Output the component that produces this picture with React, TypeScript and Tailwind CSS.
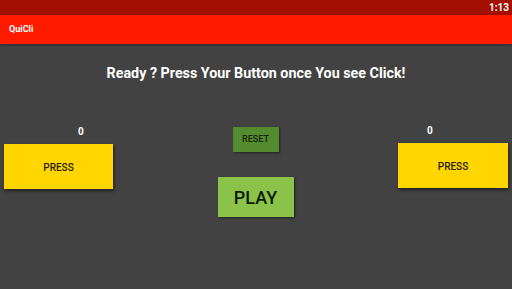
import React from "react";

export default function App() {
  const font = { fontFamily: "Roboto, 'Liberation Sans', sans-serif" };
  return (
    <div className="w-[512px] h-[289px] flex flex-col bg-[#424242] overflow-hidden" style={font}>
      <div className="h-[15px] bg-[#a30f00] flex items-center justify-end pr-[3px]">
        <span className="text-[10px] font-bold text-white leading-none">1:13</span>
      </div>
      <div className="h-[29px] bg-[#ff1a00] flex items-center pl-[9px] shadow-[0_1px_2px_rgba(0,0,0,0.4)]">
        <span className="text-[9px] font-bold text-white leading-none">QuiCli</span>
      </div>
      <div className="flex-1 flex flex-col">
        <div className="pt-[19px] h-[39px] text-center text-white font-bold text-[14.3px] leading-[20px]">
          Ready ? Press Your Button once You see Click!
        </div>
        <div className="flex flex-row justify-between px-[4px]">
          <div className="flex flex-col w-[109px] mt-[43px]">
            <div className="h-[12px] pl-[74px] text-[10px] font-bold text-white leading-[12px]">0</div>
            <div className="mt-[6px] h-[45px] bg-[#ffd600] flex items-center justify-center pt-[2px] shadow-[1px_2px_3px_rgba(0,0,0,0.5)]">
              <span className="text-[10px] font-medium text-[#2a2300]">PRESS</span>
            </div>
          </div>
          <div className="flex flex-col items-center mt-[44px]">
            <div className="w-[46px] h-[25px] bg-[#558b2f] flex items-center justify-center shadow-[1px_1px_2px_rgba(0,0,0,0.5)]">
              <span className="text-[9px] font-medium text-[#142408]">RESET</span>
            </div>
            <div className="mt-[25px] w-[76px] h-[40px] bg-[#8bc34a] flex items-center justify-center shadow-[1px_1px_2px_rgba(0,0,0,0.5)]">
              <span className="text-[18px] font-medium text-[#0f1a06]">PLAY</span>
            </div>
          </div>
          <div className="flex flex-col w-[110px] mt-[42px]">
            <div className="h-[12px] pl-[29px] text-[10px] font-bold text-white leading-[12px]">0</div>
            <div className="mt-[6px] h-[45px] bg-[#ffd600] flex items-center justify-center pt-[2px] shadow-[1px_2px_3px_rgba(0,0,0,0.5)]">
              <span className="text-[10px] font-medium text-[#2a2300]">PRESS</span>
            </div>
          </div>
        </div>
      </div>
    </div>
  );
}
